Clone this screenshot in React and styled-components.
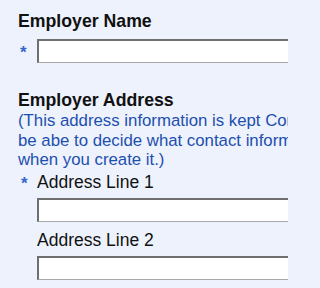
import React from 'react';
import styled, { createGlobalStyle } from 'styled-components';

const GlobalStyle = createGlobalStyle`
  html, body {
    margin: 0;
    padding: 0;
    background: #edf2fc;
  }
  body {
    font-family: 'Liberation Sans', Arial, sans-serif;
    color: #111;
  }
`;

const Page = styled.div`
  width: 288px;
  height: 288px;
  overflow: hidden;
  box-sizing: border-box;
  padding: 10px 0 0 18px;
`;

const Section = styled.section`
  margin-bottom: ${(p) => p.gap || 0}px;
`;

const Heading = styled.h2`
  margin: 0;
  font-size: 17.7px;
  font-weight: bold;
  line-height: 22px;
  white-space: nowrap;
`;

const Note = styled.p`
  margin: 0 0 1px 0;
  color: #1d4fae;
  font-size: 16.8px;
  line-height: 19.5px;
  white-space: nowrap;
`;

const Row = styled.div`
  display: flex;
  align-items: center;
  margin-top: ${(p) => p.top || 0}px;
`;

const Star = styled.span`
  width: 19px;
  flex: none;
  color: #3566c8;
  font-size: 17px;
  font-weight: bold;
  line-height: 1;
  padding-left: ${(p) => p.shift || 0}px;
  padding-top: 3px;
  box-sizing: border-box;
`;

const Label = styled.span`
  font-size: 17.5px;
  line-height: 22px;
  white-space: nowrap;
`;

const Field = styled.input`
  width: 400px;
  flex: none;
  height: 24px;
  box-sizing: border-box;
  background: #fff;
  border: 1px solid #a9a9a9;
  border-top: 2px solid #6f6f6f;
  border-left: 2px solid #6f6f6f;
  margin: 0;
  padding: 0 4px;
`;

export default function App() {
  return (
    <>
      <GlobalStyle />
      <Page>
        <Section gap={26}>
          <Heading>Employer Name</Heading>
          <Row top={7}>
            <Star shift={2}>*</Star>
            <Field type="text" />
          </Row>
        </Section>
        <Section>
          <Heading>Employer Address</Heading>
          <Note>
            (This address information is kept Confidential. You will
            <br />
            be abe to decide what contact information to share
            <br />
            when you create it.)
          </Note>
          <Row>
            <Star shift={3}>*</Star>
            <Label>Address Line 1</Label>
          </Row>
          <Row top={5}>
            <Star />
            <Field type="text" />
          </Row>
          <Row top={7}>
            <Star />
            <Label>Address Line 2</Label>
          </Row>
          <Row top={5}>
            <Star />
            <Field type="text" />
          </Row>
        </Section>
      </Page>
    </>
  );
}
